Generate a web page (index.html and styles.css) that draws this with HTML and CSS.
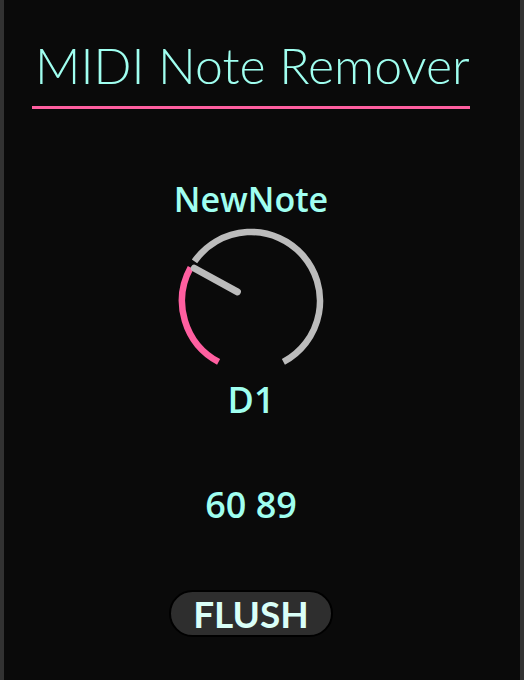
FILE: index.html
```html
<!DOCTYPE html>
<html>
<head>
<meta charset="utf-8">
<link rel="stylesheet" href="styles.css">
</head>
<body>
<div class="panel">
  <div class="column">
    <h1 class="title">MIDI Note Remover</h1>
    <div class="label">NewNote</div>
    <div class="knob">
      <svg width="150" height="150" viewBox="0 0 150 150">
        <path d="M18.5 35.4 A69 69 0 1 1 107.4 135.9" fill="none" stroke="#bcbcbc" stroke-width="6.5"/>
        <path d="M42.6 135.9 A69 69 0 0 1 14.65 41.55" fill="none" stroke="#ff5fa0" stroke-width="6.5"/>
        <line x1="61.4" y1="65.9" x2="18.3" y2="42.2" stroke="#bcbcbc" stroke-width="7" stroke-linecap="round"/>
      </svg>
    </div>
    <div class="value">D1</div>
    <div class="numbers">60 89</div>
    <button class="flush">FLUSH</button>
  </div>
</div>
</body>
</html>
```
FILE: styles.css
```css
html, body {
  margin: 0;
  padding: 0;
  background: #0a0a0a;
}
.panel {
  box-sizing: border-box;
  width: 524px;
  height: 680px;
  background: #0a0a0a;
  border-left: 4px solid #323232;
  border-right: 4px solid #323232;
  padding-left: 28px;
}
.column {
  width: 438px;
  display: flex;
  flex-direction: column;
  align-items: center;
  font-family: "Open Sans", "Liberation Sans", sans-serif;
  font-weight: 600;
  color: #a0fff0;
}
.title {
  align-self: stretch;
  margin: 0;
  padding: 35px 0 11px 3px;
  font-family: Lato, "Liberation Sans", sans-serif;
  font-weight: 300;
  font-size: 50px;
  line-height: 60px;
  border-bottom: 3px solid #ff5fa0;
  white-space: nowrap;
}
.label {
  margin-top: 70px;
  font-size: 34px;
  line-height: 40px;
}
.knob {
  margin-top: 7px;
  width: 150px;
  height: 150px;
}
.knob svg { display: block; }
.value {
  margin-top: 4px;
  font-size: 36px;
  line-height: 40px;
}
.numbers {
  margin-top: 65px;
  font-size: 36px;
  line-height: 40px;
}
.flush {
  margin-top: 65px;
  box-sizing: border-box;
  width: 164px;
  height: 47px;
  border-radius: 24px;
  background: #2e2e2e;
  border: 2px solid #000;
  color: #dafff8;
  font-family: Lato, "Liberation Sans", sans-serif;
  font-size: 37px;
  font-weight: 700;
  line-height: 43px;
  padding: 0;
}
```
